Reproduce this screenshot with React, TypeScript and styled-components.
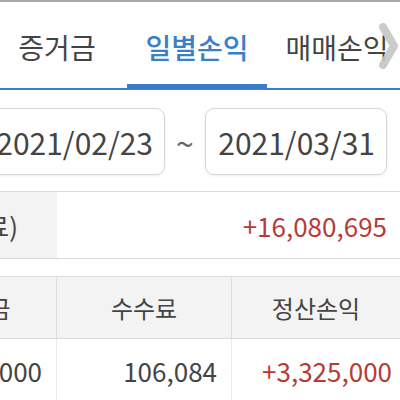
import React from "react";
import styled, { createGlobalStyle } from "styled-components";

const Global = createGlobalStyle`
  html, body { margin: 0; padding: 0; background: #ffffff; }
  body { width: 400px; height: 400px; overflow: hidden; font-family: "Noto Sans CJK KR", "Noto Sans", sans-serif; color: #444; }
`;

const Viewport = styled.div`
  width: 400px;
  height: 400px;
  overflow: hidden;
  position: relative;
  background: #fff;
  border-top: 2px solid #a8a8a8;
  box-sizing: border-box;
`;

const TabBar = styled.div`
  position: relative;
  height: 86px;
  border-bottom: 2px solid #3b7cc6;
`;

const Tabs = styled.div`
  display: flex;
  margin-left: -13px;
  height: 100%;
`;

const Tab = styled.div<{ $active?: boolean }>`
  flex: 0 0 140px;
  display: flex;
  align-items: center;
  justify-content: center;
  font-size: 28px;
  font-weight: ${(p) => (p.$active ? 500 : 400)};
  color: ${(p) => (p.$active ? "#3a80c9" : "#444")};
  position: relative;
  padding-top: 3px;
  box-sizing: border-box;
  &::after {
    content: "";
    display: ${(p) => (p.$active ? "block" : "none")};
    position: absolute;
    left: 0;
    right: 0;
    bottom: -2px;
    height: 6px;
    background: #3b7cc6;
  }
`;

const MoreArrow = styled.div`
  position: absolute;
  right: 1px;
  top: 20px;
  width: 22px;
  height: 48px;
  display: flex;
  align-items: center;
  justify-content: flex-end;
  opacity: 0.9;
`;

const DateRow = styled.div`
  display: flex;
  align-items: center;
  margin-left: -17px;
  padding: 18px 0 16px;
  border-bottom: 1px solid #dcdcdc;
`;

const DateBox = styled.div`
  flex: 0 0 182px;
  height: 67px;
  box-sizing: border-box;
  border: 1px solid #d6d6d6;
  border-radius: 9px;
  box-shadow: 0 1px 3px rgba(0, 0, 0, 0.08);
  display: flex;
  align-items: center;
  justify-content: flex-end;
  padding-right: 11px;
  font-size: 30px;
  color: #444;
`;

const Tilde = styled.div`
  flex: 0 0 40px;
  text-align: center;
  font-size: 32px;
  color: #666;
`;

const SummaryRow = styled.div`
  display: flex;
  height: 66px;
  border-bottom: 1px solid #d8d8d8;
`;

const SummaryLabel = styled.div`
  flex: 0 0 263px;
  margin-left: -206px;
  background: #f3f3f3;
  display: flex;
  align-items: center;
  justify-content: center;
  font-size: 26px;
  color: #444;
`;

const SummaryValue = styled.div`
  flex: 1;
  display: flex;
  align-items: center;
  justify-content: flex-end;
  padding-right: 13px;
  font-size: 26px;
  color: #b83a35;
`;

const Table = styled.div`
  margin-top: 17px;
  border-top: 1px solid #dcdcdc;
`;

const Row = styled.div<{ $head?: boolean }>`
  display: grid;
  grid-template-columns: 180px 175px 1fr;
  margin-left: -123px;
  height: ${(p) => (p.$head ? "61px" : "62px")};
  background: ${(p) => (p.$head ? "#f3f3f3" : "#fff")};
  border-bottom: 1px solid #dcdcdc;
`;

const Cell = styled.div<{ $head?: boolean; $red?: boolean; $pr?: number }>`
  display: flex;
  align-items: center;
  justify-content: ${(p) => (p.$head ? "center" : "flex-end")};
  padding-right: ${(p) => (p.$head ? 0 : p.$pr ?? 14)}px;
  font-size: ${(p) => (p.$head ? 24 : 26)}px;
  color: ${(p) => (p.$red ? "#b83a35" : "#444")};
  border-right: 1px solid ${(p) => (p.$head ? "#dedede" : "#ececec")};
  &:last-child { border-right: none; }
`;

export default function App() {
  return (
    <>
      <Global />
      <Viewport>
        <TabBar>
          <Tabs>
            <Tab>증거금</Tab>
            <Tab $active>일별손익</Tab>
            <Tab>매매손익</Tab>
          </Tabs>
          <MoreArrow>
            <svg width="22" height="48" viewBox="0 0 22 48">
              <polyline
                points="6,5 17,24 6,43"
                fill="none"
                stroke="#c6c6c6"
                strokeWidth="8"
                strokeLinecap="round"
                strokeLinejoin="round"
              />
            </svg>
          </MoreArrow>
        </TabBar>
        <DateRow>
          <DateBox>2021/02/23</DateBox>
          <Tilde>~</Tilde>
          <DateBox>2021/03/31</DateBox>
        </DateRow>
        <SummaryRow>
          <SummaryLabel>정산손익(수수료)</SummaryLabel>
          <SummaryValue>+16,080,695</SummaryValue>
        </SummaryRow>
        <Table>
          <Row $head>
            <Cell $head>순입출금</Cell>
            <Cell $head>수수료</Cell>
            <Cell $head>정산손익</Cell>
          </Row>
          <Row>
            <Cell>3,431,000</Cell>
            <Cell>106,084</Cell>
            <Cell $red $pr={8}>+3,325,000</Cell>
          </Row>
        </Table>
      </Viewport>
    </>
  );
}
